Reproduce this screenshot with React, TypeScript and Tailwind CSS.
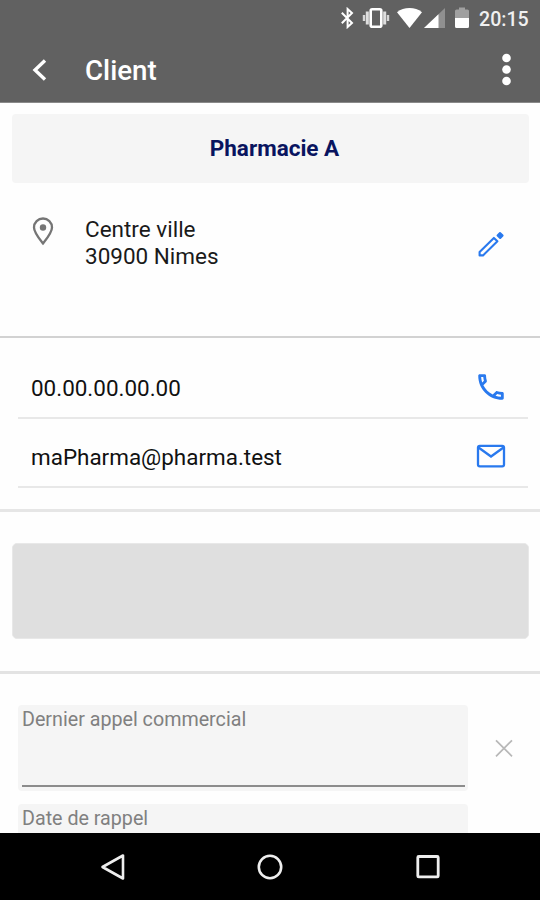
import React from 'react';

function StatusBar() {
  return (
    <div className="flex h-[38px] items-start pt-[7px] pl-[341px] text-white">
      <svg className="h-[22px] w-[13px]" viewBox="0 0 13 22" fill="none" stroke="currentColor" strokeWidth="2">
        <path d="M0.8 5.8 11 16 6.6 20V2L11 6 0.8 16.2" />
      </svg>
      <svg className="ml-[8px] h-[22px] w-[28px]" viewBox="0 0 28 22" fill="none" stroke="currentColor">
        <rect x="8.7" y="2.2" width="10.6" height="17.6" rx="1.5" strokeWidth="2.6" />
        <path d="M5.3 4.5v13M22.7 4.5v13" strokeWidth="3" opacity="0.8" />
        <path d="M2 8v6M26 8v6" strokeWidth="2.4" opacity="0.75" />
      </svg>
      <svg className="ml-[7px] h-[22px] w-[25px]" viewBox="0 0 25 22" fill="currentColor">
        <path d="M0 5.2C3.5 2.4 7.8 1 12.5 1S21.5 2.4 25 5.2L12.5 21Z" />
      </svg>
      <svg className="ml-[2px] h-[22px] w-[21px]" viewBox="0 0 21 22" fill="currentColor">
        <path d="M0 21 21 1v20Z" opacity="0.3" />
        <path d="M0 21 14.5 7.2V21Z" />
      </svg>
      <svg className="ml-[10px] h-[22px] w-[14px]" viewBox="0 0 14 22" fill="currentColor">
        <path d="M0 11V4a1.5 1.5 0 0 1 1.5-1.5H4V.5h6v2h2.5A1.5 1.5 0 0 1 14 4v7Z" opacity="0.4" />
        <path d="M0 11h14v8.5a1.5 1.5 0 0 1-1.5 1.5h-11A1.5 1.5 0 0 1 0 19.5Z" />
      </svg>
      <span className="ml-[10px] text-[19.6px] leading-[25px] font-medium text-[#f0f0f0]">20:15</span>
    </div>
  );
}

function AppBar() {
  return (
    <div className="flex h-[64px] items-center pr-[28px] pl-[32px] text-white">
      <svg className="h-[24px] w-[16px]" viewBox="0 0 16 24" fill="none" stroke="currentColor" strokeWidth="3.4">
        <path d="M13 2.5 3 12l10 9.500" />
      </svg>
      <h1 className="ml-[37px] flex-1 pt-[2px] text-[27.7px] leading-8 font-medium">Client</h1>
      <svg className="h-[34px] w-[12px]" viewBox="0 0 12 34" fill="currentColor">
        <circle cx="6.5" cy="5" r="4.3" />
        <circle cx="6.5" cy="16.5" r="4.3" />
        <circle cx="6.5" cy="28" r="4.3" />
      </svg>
    </div>
  );
}

interface ContactRowProps {
  label: string;
  icon: React.ReactNode;
}

function ContactRow({ label, icon }: ContactRowProps) {
  return (
    <div className="ml-[18px] mr-[12px] flex h-[69px] items-center justify-between border-b-2 border-[#e8e8e8] pt-[8px] pr-[20px] pl-[13px]">
      <span className="text-[22.45px] leading-7 text-[#111]">{label}</span>
      {icon}
    </div>
  );
}

function Field({ label }: { label: string }) {
  return (
    <div className="h-[86px] w-[450px] rounded bg-[#f5f5f5] pr-[3px] pl-[4px]">
      <div className="h-[82px] border-b-2 border-[#8c8c8c] pt-[2px] text-[19.7px] leading-[26px] text-[#808080]">
        {label}
      </div>
    </div>
  );
}

function NavBar() {
  return (
    <nav className="flex h-[67px] shrink-0 items-center justify-between bg-black pr-[98px] pl-[100px] text-[#eee]">
      <svg className="h-[28px] w-[26px]" viewBox="0 0 26 28" fill="none" stroke="currentColor" strokeWidth="2.6" strokeLinejoin="round">
        <path d="M23 2.5v23L2.5 14Z" />
      </svg>
      <svg className="h-[28px] w-[28px]" viewBox="0 0 28 28" fill="none" stroke="currentColor" strokeWidth="2.6">
        <circle cx="14" cy="14" r="11.2" />
      </svg>
      <svg className="h-[28px] w-[28px]" viewBox="0 0 28 28" fill="none" stroke="currentColor" strokeWidth="2.8">
        <rect x="3.8" y="3.5" width="20.4" height="20.4" rx="1" />
      </svg>
    </nav>
  );
}

export default function App() {
  return (
    <div className="flex h-[900px] w-[540px] flex-col overflow-hidden bg-[#fefefe] font-[Roboto,sans-serif]">
      <header className="h-[103px] shrink-0 border-b border-[#8a8a8a] bg-[#616161]">
        <StatusBar />
        <AppBar />
      </header>

      <main className="min-h-0 flex-1 overflow-hidden">
        <div className="mt-[11px] mr-[11px] ml-[12px] flex h-[69px] items-center justify-center rounded bg-[#f5f5f5] pl-[8px] text-[22.5px] font-bold text-[#09145f]">
          Pharmacie A
        </div>

        <section className="flex h-[155px] items-start border-b-2 border-[#d2d2d2] pt-[33px] pr-[33px] pl-[31px]">
          <svg className="h-[30px] w-[24px] text-[#757575]" viewBox="0 0 24 30" fill="none" stroke="currentColor" strokeWidth="2.3">
            <path d="M12 27.5C8 22.5 3 16.5 3 11.5a9 9 0 0 1 18 0c0 5-5 11-9 16Z" />
            <circle cx="12" cy="11.5" r="3.2" fill="currentColor" stroke="none" />
          </svg>
          <address className="ml-[30px] flex-1 text-[22.5px] leading-[27px] text-[#1a1a1a] not-italic">
            Centre ville
            <br />
            30900 Nimes
          </address>
          <svg className="mt-[12px] h-[32px] w-[32px] text-[#2979ee]" viewBox="0 0 32 32" fill="none" stroke="currentColor" strokeWidth="2.1" strokeLinejoin="round">
            <path d="M4.6 24 18.9 9.9 22.4 13.3 8 27.400H4.600Z" />
            <path d="M22.600 7.400 25 5 27.600 7.400 25.200 9.900Z" fill="currentColor" />
          </svg>
        </section>

        <section className="h-[174px] border-b-[3px] border-[#e6e6e6] pt-[12px]">
          <ContactRow
            label="00.00.00.00.00"
            icon={
              <svg className="mb-[2px] h-[34px] w-[34px] text-[#2979ee]" viewBox="0 0 24 24" fill="currentColor">
                <path d="M6.540 5c.06.890.21 1.760.45 2.590l-1.200 1.200c-.41-1.200-.67-2.470-.76-3.790h1.510m9.860 12.020c.85.240 1.720.390 2.600.450v1.490c-1.320-.09-2.590-.35-3.800-.75l1.200-1.190M7.500 3H4c-.55 0-1 .45-1 1 0 9.390 7.610 17 17 17 .55 0 1-.45 1-1v-3.490c0-.55-.45-1-1-1-1.240 0-2.450-.2-3.570-.57-.1-.04-.21-.05-.31-.05-.26 0-.51.100-.71.290l-2.200 2.200c-2.830-1.450-5.150-3.760-6.590-6.590l2.200-2.200c.28-.28.360-.67.250-1.020C8.700 6.450 8.500 5.250 8.500 4c0-.55-.45-1-1-1z" />
              </svg>
            }
          />
          <ContactRow
            label="maPharma@pharma.test"
            icon={
              <svg className="mb-[2px] h-[34px] w-[34px] text-[#2979ee]" viewBox="0 0 34 34" fill="none" stroke="currentColor" strokeWidth="2.3">
                <rect x="4" y="6.8" width="26" height="20.5" rx="1.8" />
                <path d="M4.5 8.500 17 17.5 29.5 8.500" />
              </svg>
            }
          />
        </section>

        <section className="h-[162px] border-b-[3px] border-[#e3e3e3] pt-[31px] pr-[11px] pl-[12px]">
          <div className="h-[96px] rounded-[5px] border border-[#e8e8e8] bg-[#dfdfdf]" />
        </section>

        <section className="flex flex-col gap-[13px] pt-[31px] pl-[18px]">
          <div className="flex items-center">
            <Field label="Dernier appel commercial" />
            <svg className="ml-[26px] h-[20px] w-[20px] text-[#b8b8b8]" viewBox="0 0 20 20" fill="none" stroke="currentColor" strokeWidth="1.7">
              <path d="M2 2.300l16 16M18 2.300 2 18.300" />
            </svg>
          </div>
          <Field label="Date de rappel" />
        </section>
      </main>

      <NavBar />
    </div>
  );
}
